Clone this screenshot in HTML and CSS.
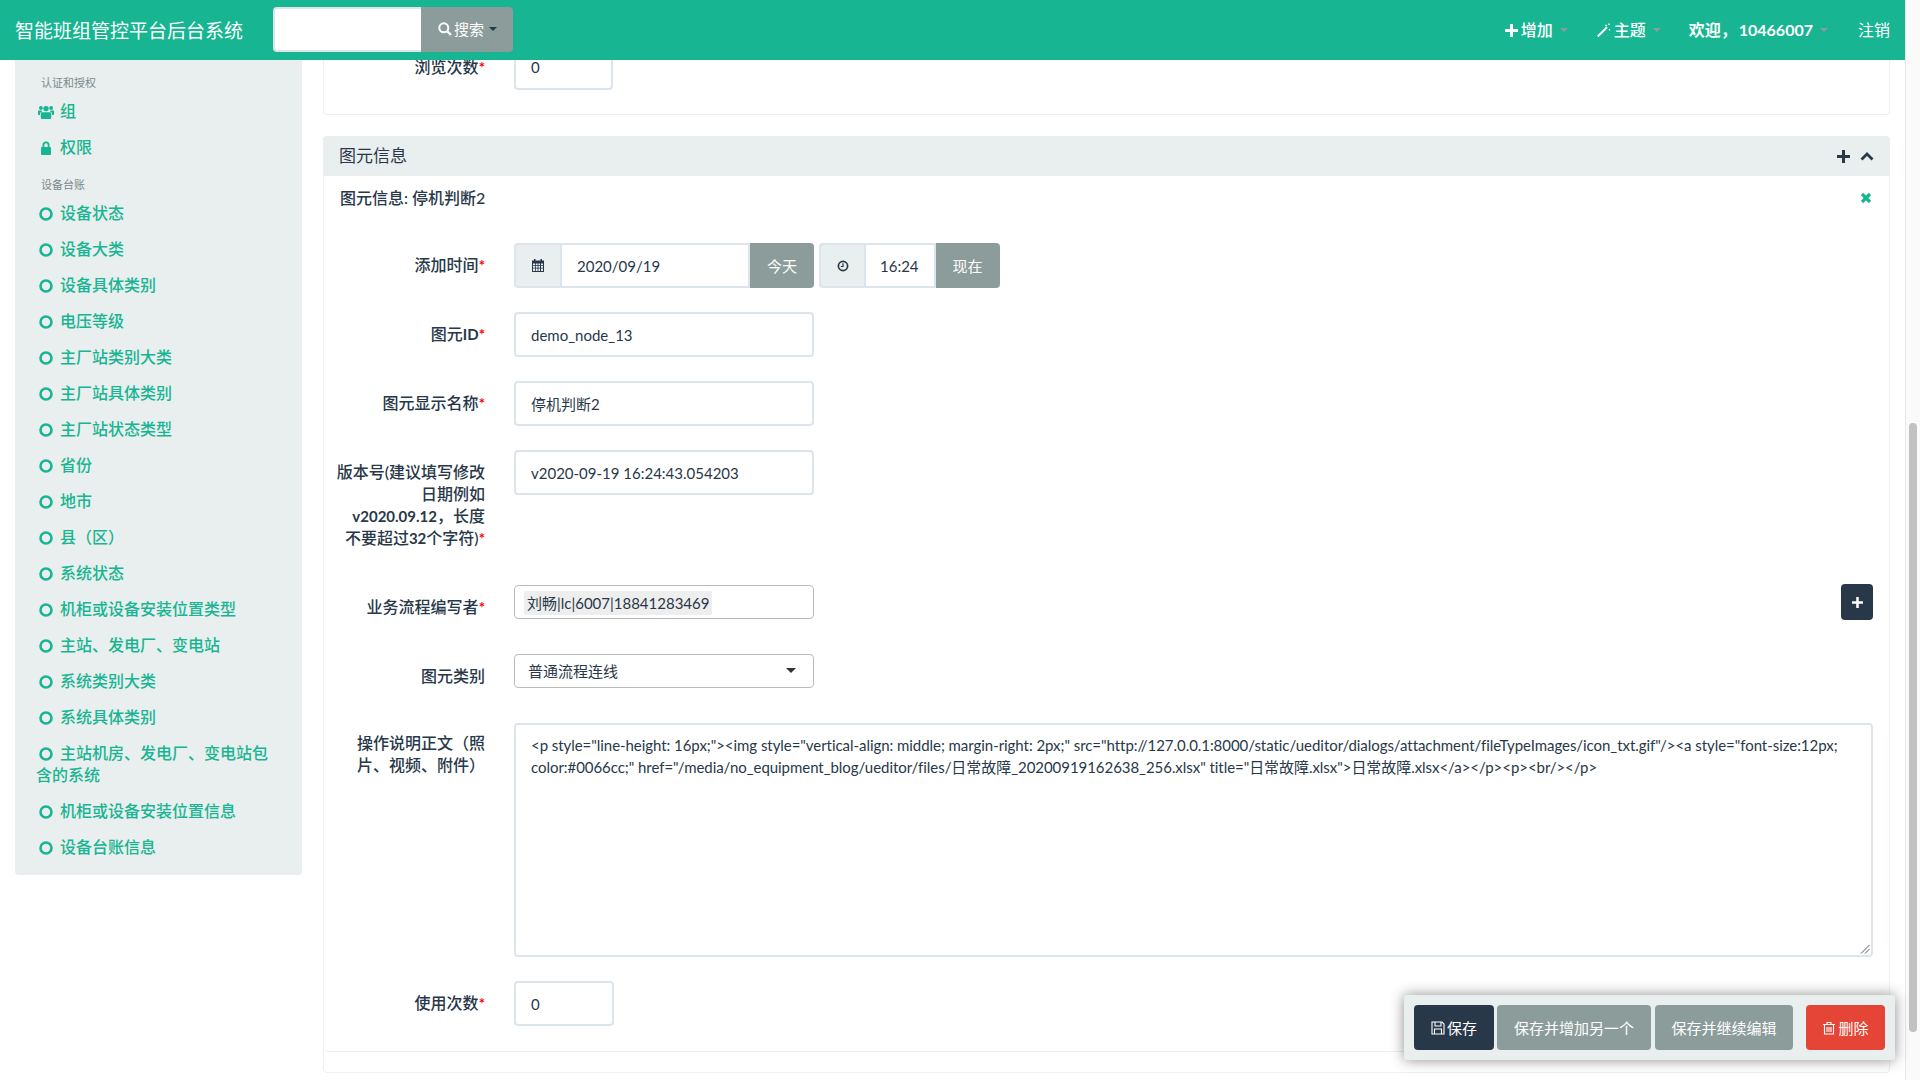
FILE: index.html
```html
<!DOCTYPE html>
<html lang="zh-CN">
  <head>
    <meta charset="UTF-8">
    <title>智能班组管控平台后台系统</title>
    <link rel="stylesheet" href="styles.css">
  </head>
  <body>
    <svg class="sprite" width="0" height="0">
      <symbol id="i-plus" viewBox="0 0 12 12"><path d="M4.600 0h2.800v4.600H12v2.800H7.400V12H4.600V7.400H0V4.600h4.600z"/></symbol>
      <symbol id="i-ring" viewBox="0 0 12 12"><circle cx="6" cy="6" r="4.700" fill="none" stroke="currentColor" stroke-width="2.200"/></symbol>
      <symbol id="i-cal" viewBox="0 0 12 13"><path d="M2 0h1.500v1.500h5V0H10v1.500h2V13H0V1.500h2zM1 4.500v1.800h2.200V4.500zm3 0v1.800h1.600V4.500zm2.400 0v1.800H8V4.500zm2.600 0v1.800h2V4.500zM1 7v1.800h2.200V7zm3 0v1.800h1.600V7zm2.400 0v1.800H8V7zm2.600 0v1.800h2V7zM1 9.500V12h2.200V9.500zm3 0V12h1.600V9.500zm2.400 0V12H8V9.500zm2.600 0V12h2V9.500z" fill-rule="evenodd"/></symbol>
    </svg>

    <nav class="navbar">
      <span class="brand">智能班组管控平台后台系统</span>
      <div class="search">
        <div class="search-input"></div>
        <div class="search-btn">
          <svg class="ico-14" viewBox="0 0 14 14"><circle cx="5.800" cy="5.800" r="4.500" fill="none" stroke="#fff" stroke-width="2"/><path d="M9 9l4 4" stroke="#fff" stroke-width="2.400"/></svg>
          搜索<i class="caret caret-dark"></i>
        </div>
      </div>
      <ul class="nav-right">
        <li><svg class="ico-13"><use href="#i-plus"/></svg>增加<i class="caret"></i></li>
        <li><svg class="ico-15" viewBox="0 0 15 15"><path d="M1 12.800L10.300 3.500l1.400 1.400-9.300 9.300z" fill="#fff"/><path d="M10 1.500v2M9 2.500h2M13 .5v1.500M12.300 1.200h1.500M13.500 6v1.500M12.700 6.700h1.600" stroke="#fff" stroke-width=".8"/></svg>主题<i class="caret"></i></li>
        <li class="welcome">欢迎，&thinsp;10466007<i class="caret"></i></li>
        <li class="logout">注销</li>
      </ul>
    </nav>

    <div class="page">
      <aside class="sidebar">
        <h5>认证和授权</h5>
        <a><svg class="side-ico" viewBox="0 0 16 14"><circle cx="8" cy="3.600" r="2.700"/><circle cx="2.900" cy="3" r="1.900"/><circle cx="13.100" cy="3" r="1.900"/><path d="M4 7.200h8a1.200 1.200 0 0 1 1.200 1.200V13a1 1 0 0 1-1 1H3.800a1 1 0 0 1-1-1V8.400A1.200 1.200 0 0 1 4 7.200zM.3 5.400h3.200l.6 1A2.500 2.500 0 0 0 2 8.800V10H.8a.8.800 0 0 1-.8-.8V5.700zM15.700 5.400h-3.200l-.6 1A2.500 2.500 0 0 1 14 8.800V10h1.200a.8.800 0 0 0 .8-.8V5.700z"/></svg>组</a>
        <a><svg class="side-ico" viewBox="0 0 16 14"><path fill-rule="evenodd" d="M4.500 6V4a3.500 3.500 0 0 1 7 0v2h.7a.8.8 0 0 1 .8.800V13a1 1 0 0 1-1 1H4a1 1 0 0 1-1-1V6.800A.8.800 0 0 1 3.800 6zm1.800 0h3.400V4a1.700 1.700 0 0 0-3.400 0z"/></svg>权限</a>
        <h5>设备台账</h5>
        <a><svg class="side-ico ring"><use href="#i-ring"/></svg>设备状态</a>
        <a><svg class="side-ico ring"><use href="#i-ring"/></svg>设备大类</a>
        <a><svg class="side-ico ring"><use href="#i-ring"/></svg>设备具体类别</a>
        <a><svg class="side-ico ring"><use href="#i-ring"/></svg>电压等级</a>
        <a><svg class="side-ico ring"><use href="#i-ring"/></svg>主厂站类别大类</a>
        <a><svg class="side-ico ring"><use href="#i-ring"/></svg>主厂站具体类别</a>
        <a><svg class="side-ico ring"><use href="#i-ring"/></svg>主厂站状态类型</a>
        <a><svg class="side-ico ring"><use href="#i-ring"/></svg>省份</a>
        <a><svg class="side-ico ring"><use href="#i-ring"/></svg>地市</a>
        <a><svg class="side-ico ring"><use href="#i-ring"/></svg>县（区）</a>
        <a><svg class="side-ico ring"><use href="#i-ring"/></svg>系统状态</a>
        <a><svg class="side-ico ring"><use href="#i-ring"/></svg>机柜或设备安装位置类型</a>
        <a><svg class="side-ico ring"><use href="#i-ring"/></svg>主站、发电厂、变电站</a>
        <a><svg class="side-ico ring"><use href="#i-ring"/></svg>系统类别大类</a>
        <a><svg class="side-ico ring"><use href="#i-ring"/></svg>系统具体类别</a>
        <a><svg class="side-ico ring"><use href="#i-ring"/></svg>主站机房、发电厂、变电站包<br>含的系统</a>
        <a><svg class="side-ico ring"><use href="#i-ring"/></svg>机柜或设备安装位置信息</a>
        <a><svg class="side-ico ring"><use href="#i-ring"/></svg>设备台账信息</a>
      </aside>

      <main class="content">
        <section class="top-card">
          <div class="row row-top">
            <label>浏览次数<b>*</b></label>
            <div class="input input-short">0</div>
          </div>
        </section>

        <section class="group">
          <header class="group-head">
            <span>图元信息</span>
            <span class="group-tools">
              <svg class="ico-13 dark"><use href="#i-plus"/></svg>
              <svg class="chevron" viewBox="0 0 14 9"><path d="M1.500 7.500L7 2l5.500 5.500" fill="none" stroke="#283849" stroke-width="2.800"/></svg>
            </span>
          </header>
          <div class="inline-form">
            <div class="inline-head">
              <span>图元信息: 停机判断2</span>
              <svg class="close" viewBox="0 0 12 12"><path d="M2 2l8 8M10 2l-8 8" stroke="#17b592" stroke-width="3.200"/></svg>
            </div>

            <div class="row row-first">
              <label>添加时间<b>*</b></label>
              <div class="picker">
                <span class="addon addon-date"><svg class="ico-cal"><use href="#i-cal"/></svg></span>
                <span class="picker-val val-date">2020/09/19</span>
                <span class="picker-btn">今天</span>
              </div>
              <div class="picker picker-time">
                <span class="addon addon-time"><svg class="ico-clock" viewBox="0 0 12 12"><circle cx="6" cy="6" r="4.600" fill="none" stroke="#283849" stroke-width="1.700"/><path d="M6 3.200V6.500H3.800" fill="none" stroke="#283849" stroke-width="1.200"/></svg></span>
                <span class="picker-val val-time">16:24</span>
                <span class="picker-btn">现在</span>
              </div>
            </div>
            <div class="row">
              <label>图元<span class="latin">ID</span><b>*</b></label>
              <div class="input">demo_node_13</div>
            </div>
            <div class="row">
              <label>图元显示名称<b>*</b></label>
              <div class="input">停机判断2</div>
            </div>
            <div class="row row-version">
              <label>版本号(建议填写修改<br>日期例如<br><span class="latin">v2020.09.12</span>，长度<br>不要超过<span class="latin">32</span>个字符)<b>*</b></label>
              <div class="input">v2020-09-19 16:24:43.054203</div>
            </div>
            <div class="row row-author">
              <label>业务流程编写者<b>*</b></label>
              <div class="select2"><span class="tag">刘畅|lc|6007|18841283469</span></div>
              <span class="add-btn"><svg class="ico-11"><use href="#i-plus"/></svg></span>
            </div>
            <div class="row row-type">
              <label>图元类别</label>
              <div class="select2 select-single">普通流程连线<i class="select-arrow"></i></div>
            </div>
            <div class="row row-body">
              <label>操作说明正文（照<br>片、视频、附件）</label>
              <div class="textarea">&lt;p style="line-height: 16px;"&gt;&lt;img style="vertical-align: middle; margin-right: 2px;" src="http://127.0.0.1:8000/static/ueditor/dialogs/attachment/fileTypeImages/icon_txt.gif"/&gt;&lt;a style="font-size:12px; color:#0066cc;" href="/media/no_equipment_blog/ueditor/files/日常故障_20200919162638_256.xlsx" title="日常故障.xlsx"&gt;日常故障.xlsx&lt;/a&gt;&lt;/p&gt;&lt;p&gt;&lt;br/&gt;&lt;/p&gt;<svg class="grip" viewBox="0 0 10 10"><path d="M1 9.500L9.500 1M5 9.500L9.500 5" stroke="#555" stroke-width="1"/></svg></div>
            </div>
            <div class="row row-count">
              <label>使用次数<b>*</b></label>
              <div class="input input-count">0</div>
            </div>
          </div>
        </section>
      </main>
    </div>

    <div class="scrollbar"><div class="scroll-thumb"></div></div>

    <div class="actions">
      <span class="btn btn-save"><svg class="ico-14" viewBox="0 0 14 14"><path d="M1 1h10l2 2v10H1zM4 1.500v3.500h6V1.500M3.500 13V8h7v5" fill="none" stroke="#fff" stroke-width="1.100"/></svg>保存</span>
      <span class="btn btn-grey btn-another">保存并增加另一个</span>
      <span class="btn btn-grey btn-continue">保存并继续编辑</span>
      <span class="btn btn-delete"><svg class="ico-14" viewBox="0 0 14 14"><path d="M1 3.500h12M5 3.500V1.500h4v2M2.500 3.500V13h9V3.500M5 6v5M7 6v5M9 6v5" fill="none" stroke="#fff" stroke-width="1.100"/></svg>删除</span>
    </div>
  </body>
</html>
```

FILE: styles.css
```css
* { box-sizing: border-box; margin: 0; padding: 0; }
:root {
  --green: #17b592;
  --dark: #283849;
  --pale: #e9eeee;
  --grey: #8b9c9a;
  --line: #dce4ec;
}
html, body {
  height: 1080px;
  overflow: hidden;
}
body {
  font-family: Lato, "Noto Sans CJK SC", sans-serif;
  font-size: 15px;
  line-height: 22px;
  color: var(--dark);
  background: #fff;
  width: 1920px;
  position: relative;
}
.sprite { position: absolute; }
svg { fill: currentColor; flex: none; }
ul { list-style: none; }

/* navbar */
.navbar {
  height: 60px;
  width: 1905px;
  background: var(--green);
  color: #fff;
  display: flex;
  align-items: center;
  padding: 0 15px;
  position: relative;
  z-index: 2;
}
.brand { font-size: 19px; width: 258px; margin-top: 1px; }
.search { display: flex; height: 45px; margin-top: -2px; }
.search-input {
  width: 148px;
  background: #fff;
  border: 2px solid var(--line);
  border-right: 0;
  border-radius: 4px 0 0 4px;
}
.search-btn {
  width: 92px;
  background: var(--grey);
  border-radius: 0 4px 4px 0;
  display: flex;
  align-items: center;
  padding-left: 17px;
  font-size: 15px;
  gap: 2px;
}
.caret {
  display: inline-block;
  border: 4px solid transparent;
  border-top-color: #8b9c9a;
  border-bottom: 0;
  margin-left: 7px;
  vertical-align: middle;
}
.caret-dark { border-top-color: var(--dark); margin-left: 3px; }
.nav-right {
  margin-left: auto;
  display: flex;
  align-items: center;
  font-weight: 500;
  font-size: 16px;
}
.nav-right li { display: flex; align-items: center; margin-left: 28px; }
.nav-right svg { margin-right: 3px; }
.welcome { font-weight: 700; }
.logout { font-weight: 400; margin-left: 30px !important; }
.ico-13 { width: 13px; height: 13px; }
.ico-11 { width: 11px; height: 11px; }
.ico-14 { width: 14px; height: 14px; }
.ico-15 { width: 15px; height: 15px; }

/* page columns */
.page {
  display: flex;
  width: 1905px;
  height: 1020px;
  overflow: hidden;
  padding: 0 15px;
  gap: 21px;
}
.sidebar {
  width: 287px;
  flex: none;
  align-self: flex-start;
  background: var(--pale);
  border-radius: 0 0 4px 4px;
  padding: 3px 0 10px;
  color: var(--green);
  font-size: 16px;
}
.sidebar h5 {
  font-size: 11px;
  font-weight: 400;
  color: #7b8a8b;
  line-height: 21px;
  padding-left: 26px;
  margin-top: 9px;
}
.sidebar a {
  display: block;
  padding: 7px 10px 7px 21px;
  font-weight: 500;
}
.side-ico {
  width: 16px;
  height: 14px;
  margin: 0 6px 0 2px;
  vertical-align: -2px;
}
.ring { width: 14px; height: 14px; margin: 0 7px 0 3px; }

/* form area */
.content { flex: 1; min-width: 0; }
.top-card {
  display: flow-root;
  height: 55px;
  border: 1px solid #ecf0f1;
  border-top: 0;
  border-radius: 0 0 4px 4px;
  margin-bottom: 21px;
}
.group {
  border: 1px solid #ecf0f1;
  border-radius: 4px;
  height: 937px;
  position: relative;
}
.group-head {
  height: 40px;
  margin: -1px -1px 0;
  background: var(--pale);
  border-radius: 4px 4px 0 0;
  display: flex;
  align-items: center;
  justify-content: space-between;
  padding: 0 16px;
  font-size: 17px;
}
.group-tools { display: flex; align-items: center; gap: 10px; }
.dark { color: var(--dark); }
.chevron { width: 14px; height: 9px; }
.inline-form {
  height: 876px;
  border-bottom: 1px solid #ecf0f1;
  border-radius: 0 0 4px 4px;
}
.inline-head {
  display: flex;
  justify-content: space-between;
  align-items: center;
  padding: 11px 17px 0 16px;
  font-weight: 500;
  font-size: 16px;
  height: 33px;
}
.close { width: 12px; height: 12px; }
.row {
  display: flex;
  padding-left: 11px;
  margin-top: 24px;
  align-items: flex-start;
}
.row-top { margin-top: -15px; }
.row-first { margin-top: 34px; }
label {
  width: 150px;
  flex: none;
  text-align: right;
  font-weight: 500;
  font-size: 16px;
  white-space: nowrap;
  margin-right: 29px;
  padding-top: 11px;
}
label b { color: #f00; font-weight: 700; font-size: 15px; }
.latin { font-weight: 700; font-size: 15px; }
.input {
  width: 300px;
  height: 45px;
  border: 2px solid var(--line);
  border-radius: 4px;
  padding: 10px 15px;
  background: #fff;
}
.input-short { width: 99px; padding-top: 9px; }
.input-count { width: 100px; }
.picker { display: flex; height: 45px; width: 300px; }
.picker-time { width: 180px; margin-left: 5px; }
.addon {
  background: var(--pale);
  border: 2px solid var(--line);
  border-right: 0;
  border-radius: 4px 0 0 4px;
  display: flex;
  align-items: center;
  justify-content: center;
  flex: none;
}
.addon-date { width: 46px; }
.addon-time { width: 45px; }
.ico-cal { width: 12px; height: 13px; }
.ico-clock { width: 12px; height: 12px; }
.picker-val {
  flex: 1;
  border: 2px solid var(--line);
  padding: 10px 15px;
  background: #fff;
}
.val-time { padding-left: 14px; }
.picker-btn {
  width: 64px;
  background: var(--grey);
  color: #fff;
  border-radius: 0 4px 4px 0;
  display: flex;
  align-items: center;
  justify-content: center;
  flex: none;
}
.row-version { height: 90px; }
.row-author { margin-top: 45px; position: relative; }
.row-author label { padding-top: 11px; }
.row-type label { padding-top: 11px; }
.select2 {
  width: 300px;
  height: 34px;
  border: 1px solid #bbb;
  border-radius: 4px;
  padding: 5px 9px;
  background: #fff;
  font-size: 15px;
  line-height: 24px;
  position: relative;
}
.tag {
  background: #eee;
  padding: 2px 3px;
  display: inline-block;
  height: 24px;
  line-height: 20px;
  border-radius: 2px;
}
.select-single { padding: 4px 13px; }
.select-arrow {
  position: absolute;
  right: 17px;
  top: 13px;
  border: 5px solid transparent;
  border-top-color: #333;
  border-bottom: 0;
}
.add-btn {
  position: absolute;
  right: 16px;
  top: -1px;
  width: 32px;
  height: 36px;
  background: var(--dark);
  color: #fff;
  border-radius: 4px;
  display: flex;
  align-items: center;
  justify-content: center;
}
.row-type { margin-top: 35px; }
.row-body { margin-top: 35px; }
.row-body label { padding-top: 9px; }
.textarea {
  flex: 1;
  margin-right: 16px;
  height: 234px;
  border: 2px solid var(--line);
  border-radius: 4px;
  padding: 9px 15px;
  font-size: 15px;
  letter-spacing: -0.05px;
  position: relative;
  background: #fff;
}
.grip { position: absolute; right: 1px; bottom: 1px; width: 10px; height: 10px; }
.row-count { margin-top: 24px; }

/* floating buttons */
.actions {
  position: absolute;
  left: 1404px;
  top: 995px;
  width: 491px;
  height: 65px;
  background: var(--pale);
  border-radius: 3px;
  box-shadow: 0 0 14px rgba(0, 0, 0, 0.45);
  display: flex;
  padding: 10px;
  z-index: 3;
}
.btn {
  height: 45px;
  color: #fff;
  border-radius: 4px;
  display: flex;
  align-items: center;
  justify-content: center;
  gap: 2px;
}
.btn-save { width: 80px; background: var(--dark); margin-right: 3px; }
.btn-grey { background: var(--grey); }
.btn-another { width: 154px; margin-right: 4px; }
.btn-continue { width: 138px; margin-right: 13px; }
.btn-delete { width: 79px; background: #e44536; }

/* scrollbar */
.scrollbar {
  position: absolute;
  right: 0;
  top: 0;
  width: 15px;
  height: 1080px;
  background: #fafafa;
  border-left: 1px solid #e8e8e8;
}
.scroll-thumb {
  position: absolute;
  left: 3px;
  top: 423px;
  width: 8px;
  height: 609px;
  background: #c1c1c1;
  border-radius: 4px;
}
```
